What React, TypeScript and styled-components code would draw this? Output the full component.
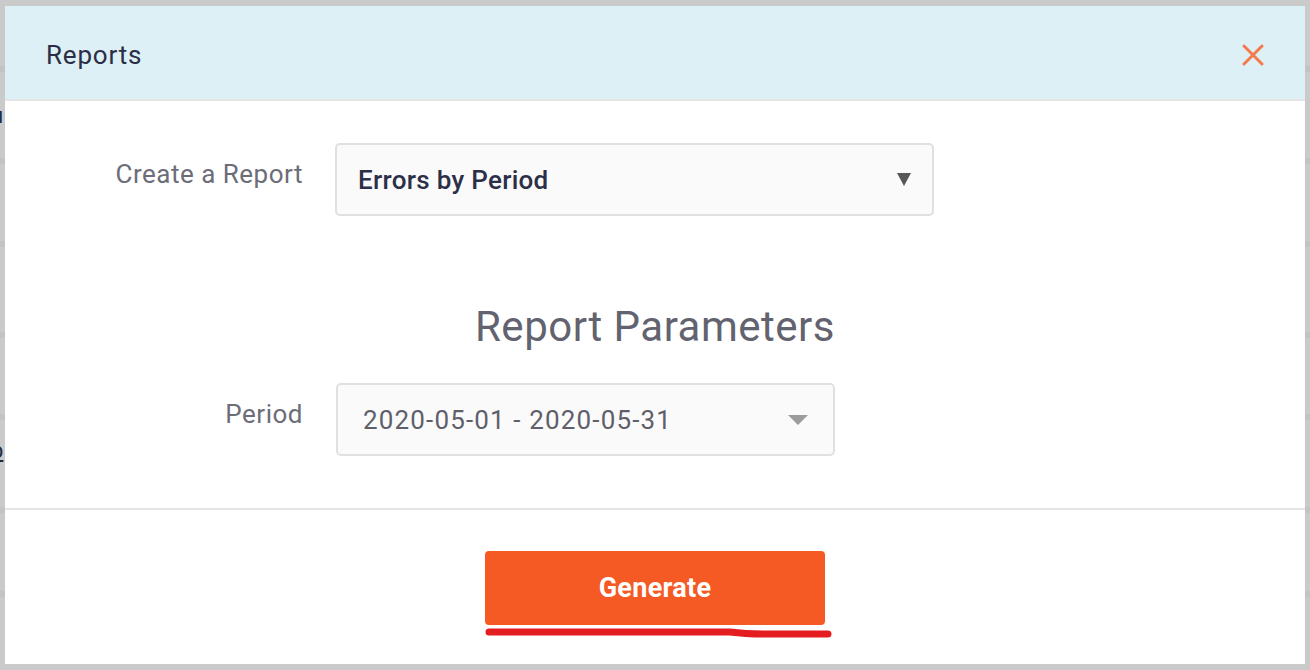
import React from "react";
import styled, { createGlobalStyle } from "styled-components";

const GlobalStyle = createGlobalStyle`
  html, body {
    margin: 0;
    padding: 0;
    width: 1310px;
    height: 670px;
    overflow: hidden;
    background: #cacaca;
    font-family: Roboto, "Liberation Sans", sans-serif;
  }
`;

const Backdrop = styled.div`
  position: relative;
  width: 1310px;
  height: 670px;
  background: #cacaca;
  overflow: hidden;
`;

const BackRow = styled.div<{ h: number }>`
  height: ${(p) => p.h}px;
  border-bottom: 6px solid #c3c3c3;
  display: flex;
  align-items: center;
  box-sizing: border-box;
`;

const BackGlyph = styled.span<{ underline?: boolean; shift: number }>`
  margin-left: -9px;
  margin-top: ${(p) => p.shift}px;
  font-size: 22px;
  color: #1f2a40;
  text-decoration: ${(p) => (p.underline ? "underline" : "none")};
`;

const Modal = styled.div`
  position: absolute;
  top: 6px;
  left: 5px;
  width: 1300px;
  height: 658px;
  background: #ffffff;
  display: flex;
  flex-direction: column;
`;

const Header = styled.div`
  height: 95px;
  background: #dcf0f6;
  border-bottom: 2px solid #e4e4e4;
  display: flex;
  align-items: center;
  justify-content: space-between;
  padding: 4px 40px 0 41px;
  box-sizing: border-box;
  flex-shrink: 0;
`;

const Title = styled.h2`
  margin: 0;
  font-size: 26px;
  font-weight: 400;
  color: #2b2e45;
  letter-spacing: 0.8px;
`;

const CloseButton = styled.button`
  border: 0;
  background: none;
  padding: 0;
  width: 24px;
  height: 24px;
  cursor: pointer;
  display: flex;
`;

const Body = styled.div`
  padding: 42px 0 52px;
  border-bottom: 2px solid #e4e4e4;
  display: flex;
  flex-direction: column;
`;

const FieldRow = styled.div`
  display: grid;
  grid-template-columns: 298px auto;
  column-gap: 32px;
  align-items: start;
`;

const Label = styled.label<{ top: number }>`
  text-align: right;
  font-size: 26px;
  color: #6c6d79;
  padding-top: ${(p) => p.top}px;
  letter-spacing: 0.5px;
`;

const Select = styled.div<{ w: number; pad: number }>`
  width: ${(p) => p.w}px;
  height: 73px;
  box-sizing: border-box;
  border: 2px solid #e0e0e0;
  border-radius: 5px;
  background: #fafafa;
  display: flex;
  align-items: center;
  justify-content: space-between;
  padding: 0 ${(p) => p.pad}px 0 ${(p) => p.pad}px;
`;

const SelectValue = styled.span<{ strong?: boolean }>`
  font-size: 26px;
  font-weight: ${(p) => (p.strong ? 500 : 400)};
  color: ${(p) => (p.strong ? "#2d2f48" : "#5e5f6b")};
  letter-spacing: ${(p) => (p.strong ? 0.3 : 1.15)}px;
`;

const Caret = styled.span<{ dark?: boolean }>`
  width: 0;
  height: 0;
  border-left: ${(p) => (p.dark ? 7 : 10)}px solid transparent;
  border-right: ${(p) => (p.dark ? 7 : 10)}px solid transparent;
  border-top: ${(p) => (p.dark ? 13 : 10)}px solid ${(p) => (p.dark ? "#585858" : "#9c9c9c")};
`;

const SectionTitle = styled.h3`
  margin: 86px 0 31px;
  text-align: center;
  font-size: 42px;
  line-height: 50px;
  font-weight: 400;
  color: #62636f;
  letter-spacing: 0.5px;
`;

const Footer = styled.div`
  flex: 1;
  display: flex;
  flex-direction: column;
  align-items: center;
  padding-top: 41px;
`;

const GenerateButton = styled.button`
  width: 340px;
  height: 74px;
  border: 0;
  border-radius: 4px;
  background: #f55a24;
  color: #ffffff;
  font-family: Roboto, "Liberation Sans", sans-serif;
  font-size: 27px;
  font-weight: 700;
  letter-spacing: 0.3px;
  cursor: pointer;
`;

const Scribble = styled.svg`
  margin-top: 3px;
  margin-left: 8px;
`;

const backRows: { h: number; glyph?: string; underline?: boolean; shift?: number }[] = [
  { h: 72 },
  { h: 92, glyph: "u", shift: 0 },
  { h: 83 },
  { h: 91 },
  { h: 82 },
  { h: 93, glyph: "p", underline: true, shift: -26 },
  { h: 84 },
  { h: 80 },
];

export default function App() {
  return (
    <>
      <GlobalStyle />
      <Backdrop>
        {backRows.map((r, i) => (
          <BackRow key={i} h={r.h}>
            {r.glyph && (
              <BackGlyph underline={r.underline} shift={r.shift ?? 0}>
                {r.glyph}
              </BackGlyph>
            )}
          </BackRow>
        ))}
        <Modal>
          <Header>
            <Title>Reports</Title>
            <CloseButton aria-label="Close">
              <svg width="24" height="24" viewBox="0 0 24 24">
                <path
                  d="M3 3 L21 21 M21 3 L3 21"
                  stroke="#f47a4c"
                  strokeWidth="3"
                  strokeLinecap="round"
                />
              </svg>
            </CloseButton>
          </Header>
          <Body>
            <FieldRow>
              <Label top={16}>Create a Report</Label>
              <Select w={599} pad={21}>
                <SelectValue strong>Errors by Period</SelectValue>
                <Caret dark />
              </Select>
            </FieldRow>
            <SectionTitle>Report Parameters</SectionTitle>
            <FieldRow>
              <Label top={16}>Period</Label>
              <Select w={499} pad={25} style={{ marginLeft: 1 }}>
                <SelectValue>2020-05-01 - 2020-05-31</SelectValue>
                <Caret />
              </Select>
            </FieldRow>
          </Body>
          <Footer>
            <GenerateButton>Generate</GenerateButton>
            <Scribble width="348" height="10" viewBox="0 0 348 10">
              <path
                d="M4 4 L245 4 Q260 6 280 6 L343 6"
                stroke="#e41e20"
                strokeWidth="7"
                strokeLinecap="round"
                fill="none"
              />
            </Scribble>
          </Footer>
        </Modal>
      </Backdrop>
    </>
  );
}
